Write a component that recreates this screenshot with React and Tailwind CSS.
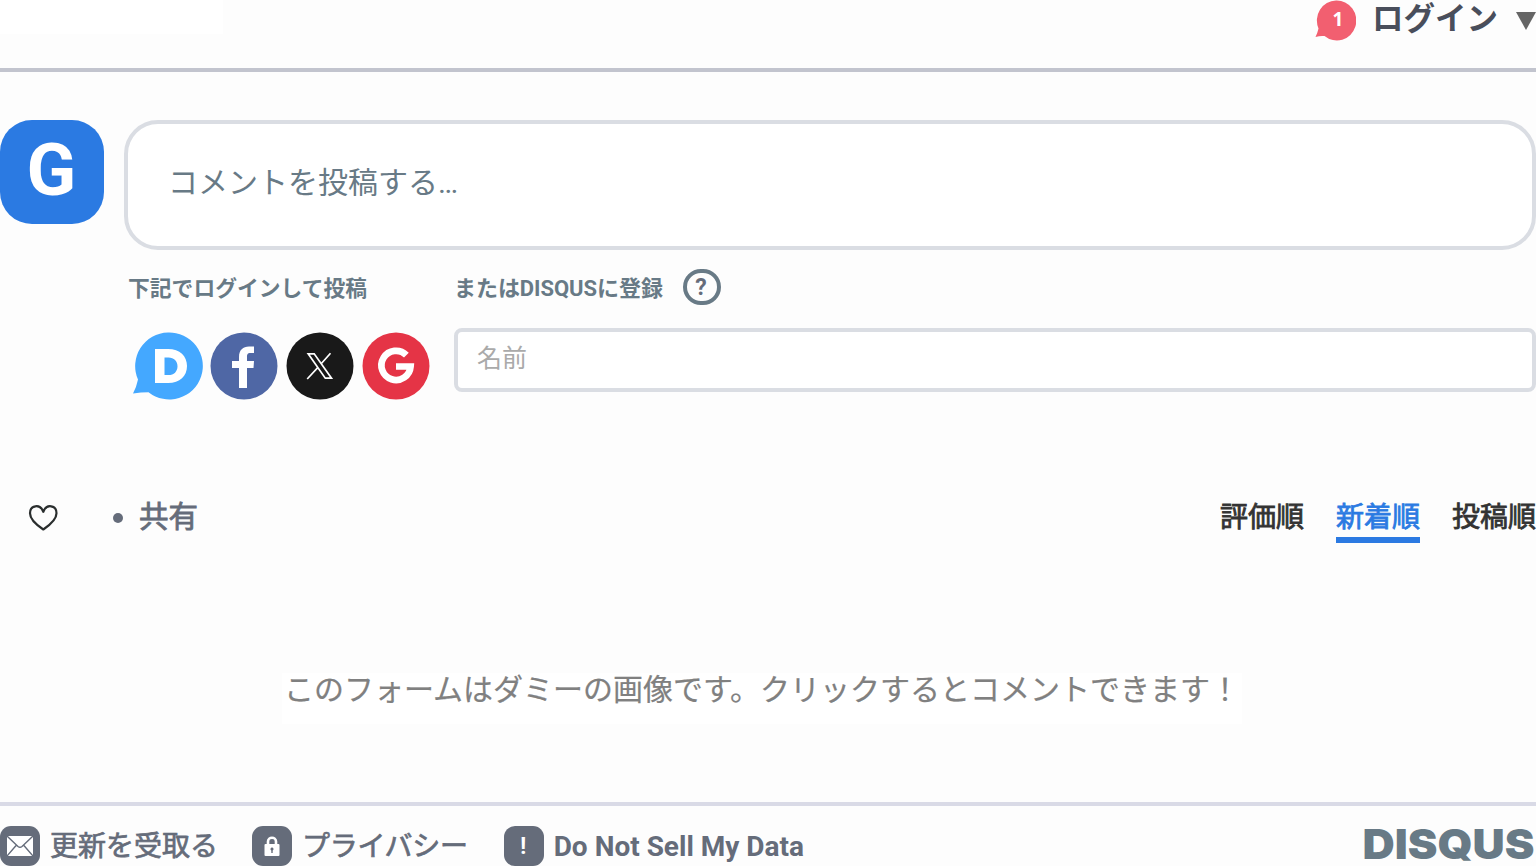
import React from "react";

function Tail({ className, fill, children }) {
  return (
    <svg className={className} viewBox="0 0 70 70" fill="none">
      <path d="M35 1.500A33.500 33.500 0 1 1 15.500 61.200Q8 61.300 0 62.500Q3.500 56 5 48.500A33.500 33.500 0 0 1 35 1.500Z" fill={fill} />
      {children}
    </svg>
  );
}

function Disc({ fill, children }) {
  return (
    <svg className="h-[70px] w-[70px]" viewBox="0 0 70 70" fill="none">
      <circle cx="35" cy="35" r="33.500" fill={fill} />
      {children}
    </svg>
  );
}

function Header() {
  return (
    <header className="flex h-[72px] items-start justify-between border-b-4 border-[#c2c4ce]">
      <div className="h-[34px] w-[223px] bg-white" />
      <div className="flex items-start">
        <div className="relative h-[41px] w-[41px]">
          <svg className="h-[41px] w-[41px]" viewBox="0 0 41 41">
            <path d="M21 .5A19.500 20 0 1 1 9.500 36Q5 35.500 .5 37Q2.500 33 3.500 28.500A19.500 20 0 0 1 21 .5Z" fill="#f25f70" />
          </svg>
          <span className="absolute left-[3px] top-0 w-10 text-center font-['Open_Sans'] text-[19px] font-bold leading-[38px] text-white">1</span>
        </div>
        <span className="ml-4 mr-[2px] pt-[2px] text-[31.500px] font-bold leading-[36px] text-[#494e5b]">ログイン</span>
        <svg className="ml-4 mt-3 h-[18px] w-5" viewBox="0 0 20 18">
          <path d="M0 0H20L10 18Z" fill="#656565" />
        </svg>
      </div>
    </header>
  );
}

function LoginOptions() {
  return (
    <div className="w-[326px]">
      <h2 className="h-[38px] text-[21.800px] font-bold leading-[41px] text-[#687a86]">下記でログインして投稿</h2>
      <div className="mt-[25px] flex gap-[6px] pl-[5px]">
        <Tail className="h-[70px] w-[70px]" fill="#44a8ff">
          <path fillRule="evenodd" d="M22 18H35C47 18 54 25 54 35C54 45 47 52 35 52H22ZM31.500 26.500V44H35.500C41 44 44.500 40.500 44.500 35.200C44.500 30 41 26.500 35.500 26.500Z" fill="#fff" />
        </Tail>
        <Disc fill="#4f67a5">
          <path d="M30 57V37H23V30H30V26C30 19 34 15.500 40 15.500H45V22H41.500C38.500 22 38 23.500 38 26V30H45L44.500 37H38V57Z" fill="#fff" />
        </Disc>
        <Disc fill="#191919">
          <path d="M23.200 22.800H29.200L46.500 47.200H40.300ZM45.500 22.300L35.700 33.200M33.200 36.200L22.200 48" stroke="#fff" strokeWidth="1.700" />
        </Disc>
        <Disc fill="#e53446">
          <path d="M45.400 24.100A14.600 14.600 0 1 0 49.600 35.500H35" stroke="#fff" strokeWidth="6.700" />
        </Disc>
      </div>
    </div>
  );
}

function Register() {
  return (
    <div className="flex-1">
      <div className="flex h-[38px] items-center">
        <h2 className="pt-[3px] text-[22px] font-bold leading-[38px] tracking-[-0.05px] text-[#687a86]">またはDISQUSに登録</h2>
        <span className="ml-5 flex h-9 w-[38px] items-center justify-center rounded-full border-4 border-[#687a86] pr-0.5 pt-[3px] text-[23px] font-bold text-[#656c7a]">?</span>
      </div>
      <div className="mt-[22px] flex h-16 items-center rounded-[8px] border-4 border-[#dadde3] bg-white px-[19px] text-[25px] text-[#aaa]">
        <span className="-mt-0.5">名前</span>
      </div>
    </div>
  );
}

function Footer() {
  const item = "flex h-10 items-center gap-[10px]";
  const box = "flex h-10 w-10 items-center justify-center rounded-[11px] bg-[#656c7a]";
  const label = "pt-[2px] [-webkit-text-stroke:0.7px_currentColor]";
  return (
    <footer className="flex h-16 items-start border-t-4 border-[#d9dae6] pt-5 text-[28px] leading-[40px] text-[#656c7a]">
      <a className={item}>
        <span className={box}>
          <svg className="h-5 w-[26px]" viewBox="0 0 26 20">
            <path d="M0 0H26V20H0Z" fill="#fff" />
            <path d="M0 0L11 10.500Q13 12 15 10.500L26 0M0 20L9.500 9M26 20L16.500 9" fill="none" stroke="#656c7a" strokeWidth="1.400" />
          </svg>
        </span>
        <span className={label}>更新を受取る</span>
      </a>
      <a className={item + " ml-[34px]"}>
        <span className={box}>
          <svg className="h-5 w-4" viewBox="0 0 16 20">
            <path d="M4 9V5.500C4 .5 12 .5 12 5.500V9" fill="none" stroke="#fff" strokeWidth="2.600" />
            <rect x=".5" y="8" width="15" height="12" rx="1" fill="#fff" />
            <path d="M8 11.500A1.600 1.600 0 0 1 8.700 14.500V17H7.300V14.500A1.600 1.600 0 0 1 8 11.500Z" fill="#656c7a" />
          </svg>
        </span>
        <span className={label + " tracking-[-0.3px]"}>プライバシー</span>
      </a>
      <a className={item + " ml-[36px]"}>
        <span className={box}>
          <span className="pr-px text-[24px] font-semibold text-white">!</span>
        </span>
        <span className="pt-0.5 font-bold">Do Not Sell My Data</span>
      </a>
      <svg className="ml-auto h-10 w-[173px]" viewBox="0 0 173 40">
        <text x="-0.500" y="32.500" textLength="172" lengthAdjust="spacingAndGlyphs" fontFamily="Inter" fontWeight="900" fontSize="41" fill="#687a86">DISQUS</text>
      </svg>
    </footer>
  );
}

export default function App() {
  return (
    <div className="flex h-[866px] w-[1536px] flex-col overflow-hidden bg-[#fdfdfd] font-['Roboto','Noto_Sans_CJK_JP',sans-serif]">
      <Header />
      <section className="mt-12 flex gap-5">
        <div className="flex h-[104px] w-[104px] justify-center rounded-[32px] bg-[#2b7ae2] pr-px text-[73px] font-bold leading-[101px] text-white">G</div>
        <div className="flex h-[130px] flex-1 rounded-[34px] border-4 border-[#dadde3] bg-white px-10 text-[30px] leading-[118px] text-[#687a86]">コメントを投稿する…</div>
      </section>
      <section className="mt-[18px] flex pl-32">
        <LoginOptions />
        <Register />
      </section>
      <nav className="mt-[93px] flex h-12 items-start pl-7">
        <svg className="mt-[10px] h-[27px] w-[30px]" viewBox="0 0 30 27" fill="none" stroke="#2a2e2e" strokeWidth="2.200" strokeLinejoin="round">
          <path d="M15.300 25.500C8.500 21 2 15.500 2 9.300C2 1.200 12 -.8 15.300 7.800C18.600 -.8 28.500 1.200 28.500 9.300C28.500 15.500 22 21 15.300 25.500Z" />
        </svg>
        <span className="ml-[55px] mt-[19px] h-[10px] w-[10px] rounded-full bg-[#656c7a]" />
        <span className="ml-4 pt-0.5 text-[29.500px] leading-[42px] text-[#656c7a] [-webkit-text-stroke:0.8px_currentColor]">共有</span>
        <div className="ml-auto flex gap-8 pt-px text-[28px] leading-[46px] text-[#333] [-webkit-text-stroke:0.8px_currentColor]">
          <span>評価順</span>
          <span className="h-[48px] border-b-[6px] border-[#2b7ae2] text-[#2b7ae2]">新着順</span>
          <span>投稿順</span>
        </div>
      </nav>
      <p className="ml-[282px] mt-[131px] h-[51px] w-[960px] whitespace-nowrap bg-white pl-0.5 text-[30px] leading-[34px] text-[#808080] [-webkit-text-stroke:0.2px_currentColor]">このフォームはダミーの画像です。クリックするとコメントできます！</p>
      <div className="flex-1" />
      <Footer />
    </div>
  );
}
